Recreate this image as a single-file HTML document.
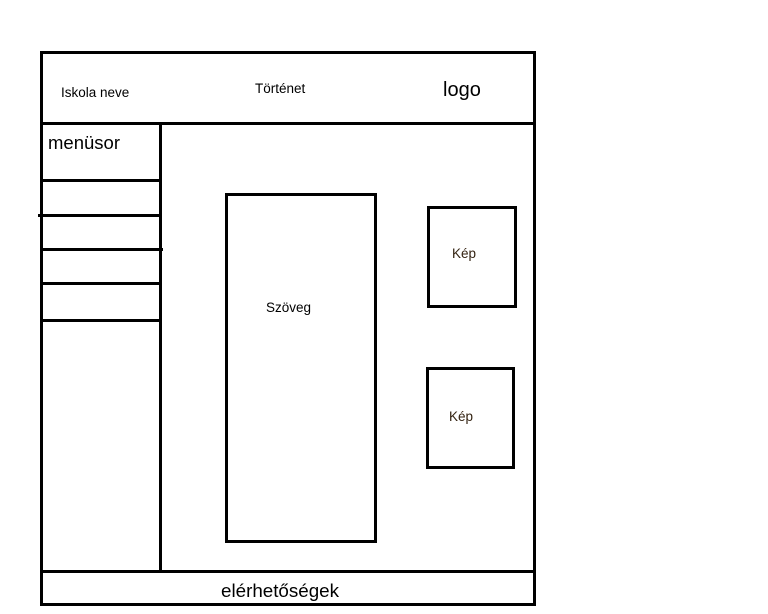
<!DOCTYPE html>
<html><head><meta charset="utf-8"><style>
html,body{margin:0;padding:0;background:#fff;width:768px;height:614px;overflow:hidden}
.b{position:absolute;background:#000}
.r{position:absolute;border:3px solid #000;box-sizing:border-box}
.t{position:absolute;font-family:"Liberation Sans",sans-serif;color:#000;white-space:nowrap}
</style></head><body>
<div class="r" style="left:40px;top:51px;width:496px;height:555px"></div>
<div class="b" style="left:40px;top:122px;width:496px;height:3px"></div>
<div class="b" style="left:40px;top:570px;width:496px;height:3px"></div>
<div class="b" style="left:159px;top:122px;width:3px;height:450px"></div>
<div class="b" style="left:40px;top:179px;width:121px;height:3px"></div>
<div class="b" style="left:38px;top:214px;width:123px;height:3px"></div>
<div class="b" style="left:40px;top:248px;width:123px;height:3px"></div>
<div class="b" style="left:40px;top:282px;width:121px;height:3px"></div>
<div class="b" style="left:40px;top:319px;width:121px;height:3px"></div>
<div class="r" style="left:225px;top:193px;width:152px;height:350px"></div>
<div class="r" style="left:427px;top:206px;width:90px;height:102px"></div>
<div class="r" style="left:426px;top:367px;width:89px;height:102px"></div>
<div class="t" style="left:61px;top:85px;font-size:13.5px">Iskola neve</div>
<div class="t" style="left:255px;top:81px;font-size:13.5px">Történet</div>
<div class="t" style="left:443px;top:79px;font-size:20px">logo</div>
<div class="t" style="left:48px;top:132px;font-size:18.5px">menüsor</div>
<div class="t" style="left:266px;top:300px;font-size:13.5px">Szöveg</div>
<div class="t" style="left:452px;top:246px;font-size:13.5px;color:#321">Kép</div>
<div class="t" style="left:449px;top:409px;font-size:13.5px;color:#321">Kép</div>
<div class="t" style="left:221px;top:580px;font-size:18.8px">elérhetőségek</div>
</body></html>
